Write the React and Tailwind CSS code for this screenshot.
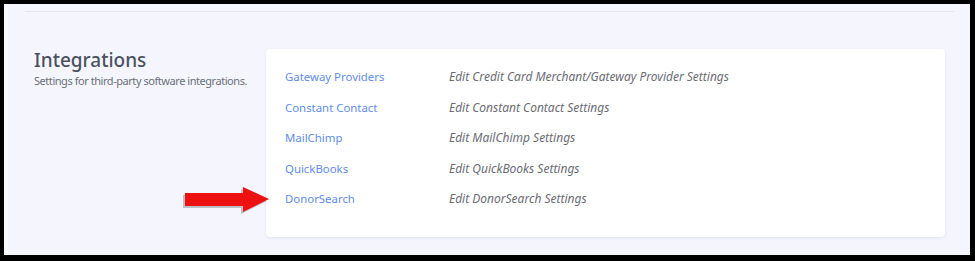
import React from "react";

const rows = [
  { name: "Gateway Providers", desc: "Edit Credit Card Merchant/Gateway Provider Settings" },
  { name: "Constant Contact", desc: "Edit Constant Contact Settings" },
  { name: "MailChimp", desc: "Edit MailChimp Settings" },
  { name: "QuickBooks", desc: "Edit QuickBooks Settings" },
  { name: "DonorSearch", desc: "Edit DonorSearch Settings" },
];

const Arrow = () => (
  <svg
    className="absolute left-[172px] top-[180px]"
    width="95"
    height="34"
    viewBox="0 0 95 34"
  >
    <polygon
      points="5,9 63,9 63,3 89,15 63,28 63,22 5,22"
      fill="#000"
      opacity="0.22"
      transform="translate(-2,2)"
    />
    <polygon points="5,9 63,9 63,3 89,15 63,28 63,22 5,22" fill="#ee1111" />
  </svg>
);

const App = () => {
  return (
    <div className="w-[975px] h-[261px] bg-black pt-[4px] pl-[4px] pr-[5px] pb-[6px] font-['Noto_Sans',sans-serif]">
      <div className="relative w-full h-full bg-[#f5f6fd] border-l-4 border-[#fafafe] pt-[7px]">
        <div className="ml-[17px] mr-[16px] border-t border-[#e2e4ef]" />
        <div className="flex items-start pt-[36px]">
          <div className="w-[258px] shrink-0 pl-[26px]">
            <h2 className="text-[19px] leading-[24px] font-medium text-[#4b5162]">Integrations</h2>
            <p className="mt-[0px] text-[11px] tracking-[-0.45px] leading-[18px] text-[#6b707c] whitespace-nowrap">
              Settings for third-party software integrations.
            </p>
          </div>
          <div className="mt-[1px] w-[679px] h-[188px] shrink-0 bg-white rounded-[4px] shadow-[0_1px_3px_rgba(60,70,120,0.12)] pl-[19px] pt-[13px]">
            {rows.map((r) => (
              <div key={r.name} className="flex h-[30.5px] leading-[30.5px] text-[12px]">
                <a className="w-[164px] text-[11.4px] text-[#5f8de8] cursor-pointer">{r.name}</a>
                <span className="italic text-[#6b6b74]">{r.desc}</span>
              </div>
            ))}
          </div>
        </div>
        <Arrow />
      </div>
    </div>
  );
};

export default App;
